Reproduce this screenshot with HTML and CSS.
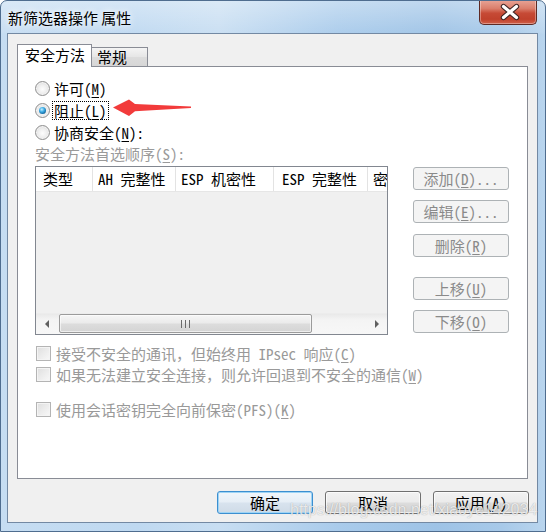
FILE: index.html
```html
<!DOCTYPE html>
<html lang="zh-CN">
<head>
<meta charset="utf-8">
<title>新筛选器操作 属性</title>
<link rel="stylesheet" href="styles.css">
</head>
<body>
<div class="window">
  <div class="titlebar">
    <span class="title">新筛选器操作 属性</span>
    <div class="close">
      <svg width="58" height="25" viewBox="0 0 58 25">
        <path d="M24.5 7.5 L37.5 18.5 M37.5 7.5 L24.5 18.5" stroke="#3b2424" stroke-width="5.4" stroke-linecap="round" fill="none"/>
        <path d="M24.5 7.5 L37.5 18.5 M37.5 7.5 L24.5 18.5" stroke="#ffffff" stroke-width="3.2" stroke-linecap="round" fill="none"/>
      </svg>
    </div>
  </div>
  <div class="client">
    <div class="tabs">
      <div class="tab active">安全方法</div>
      <div class="tab">常规</div>
    </div>
    <div class="panel">
      <svg class="annot-arrow" width="80" height="18" viewBox="0 0 80 18">
        <polygon points="1,8.5 17,0.5 23,5 79,7.6 79,9 23,12.2 17,17" fill="#f23b3b"/>
      </svg>
      <div class="radio-row"><span class="radio"></span><span class="rtext">许可(<u>M</u>)</span></div>
      <div class="radio-row"><span class="radio checked"></span><span class="rtext focus">阻止(<u>L</u>)</span></div>
      <div class="radio-row"><span class="radio"></span><span class="rtext">协商安全(<u>N</u>):</span></div>
      <div class="label-dis">安全方法首选顺序(<u>S</u>):</div>
      <div class="list-row">
        <div class="list">
          <div class="list-head">
            <div class="col c1">类型</div>
            <div class="col c2">AH 完整性</div>
            <div class="col c3">ESP 机密性</div>
            <div class="col c4">ESP 完整性</div>
            <div class="col c5">密</div>
          </div>
          <div class="list-body"></div>
          <div class="hscroll">
            <div class="sbtn"><span class="tri-left"></span></div>
            <div class="track">
              <div class="thumb"><span class="grip"></span><span class="grip"></span><span class="grip"></span></div>
            </div>
            <div class="sbtn"><span class="tri-right"></span></div>
          </div>
        </div>
        <div class="side-btns">
          <div class="btn dis">添加(<u>D</u>)...</div>
          <div class="btn dis b2">编辑(<u>E</u>)...</div>
          <div class="btn dis b3">删除(<u>R</u>)</div>
          <div class="btn dis b4">上移(<u>U</u>)</div>
          <div class="btn dis b5">下移(<u>O</u>)</div>
        </div>
      </div>
      <div class="check-row r1"><span class="cbox"></span><span class="ctext">接受不安全的通讯，但始终用 IPsec 响应(<u>C</u>)</span></div>
      <div class="check-row"><span class="cbox"></span><span class="ctext">如果无法建立安全连接，则允许回退到不安全的通信(<u>W</u>)</span></div>
      <div class="check-row r3"><span class="cbox"></span><span class="ctext">使用会话密钥完全向前保密(PFS)(<u>K</u>)</span></div>
    </div>
    <div class="bottom-btns">
      <div class="btn default">确定</div>
      <div class="btn">取消</div>
      <div class="btn">应用(<u>A</u>)</div>
    </div>
  </div>
  <div class="watermark">https://blog.csdn.net/xiaoye142034</div>
</div>
</body>
</html>
```
FILE: styles.css
```css
* { box-sizing: border-box; }
html, body { margin: 0; padding: 0; }
body {
  width: 546px;
  height: 532px;
  overflow: hidden;
  font-family: "Noto Sans Mono CJK SC", "Noto Sans CJK SC", sans-serif;
  font-size: 15px;
  color: #000;
  background: #fff;
}
u { text-decoration: underline; text-underline-offset: 2px; }

.window {
  position: relative;
  width: 546px;
  height: 532px;
  border: 1px solid #4f6d8f;
  border-radius: 7px 7px 0 0;
  overflow: hidden;
  display: flex;
  flex-direction: column;
  background:
    linear-gradient(to bottom, rgba(255,255,255,0.35) 0, rgba(255,255,255,0.05) 32px, rgba(255,255,255,0) 33px),
    linear-gradient(to right, #c6ddf2 0%, #bfd9f1 25%, #c8def2 40%, #a9cbeb 62%, #9ec3e6 80%, #a7c9e9 92%, #b9d5ee 100%);
}

.titlebar {
  height: 32px;
  flex: none;
  display: flex;
  justify-content: space-between;
  align-items: flex-start;
  padding-left: 7px;
  padding-right: 8px;
}
.title {
  font-family: "Noto Sans CJK SC", sans-serif;
  font-size: 15px;
  line-height: 20px;
  margin-top: 7px;
  color: #000;
  text-shadow: 0 0 6px rgba(255,255,255,0.9), 0 0 10px rgba(255,255,255,0.7);
}
.close {
  width: 58px;
  height: 25px;
  margin-top: -1px;
  border: 1px solid #5e2a24;
  border-top: none;
  border-radius: 0 0 5px 5px;
  background: linear-gradient(to bottom, #e8a597 0%, #db7f6c 35%, #c64a36 55%, #c0412c 80%, #d0604a 100%);
  box-shadow: inset 0 0 0 1px rgba(255,255,255,0.35);
}
.close svg { display: block; margin: -1px 0 0 -1px; }

.client {
  height: 490px;
  margin: 0 7px 0 6px;
  border: 1px solid #7389a3;
  background: #f0f0f0;
  display: flex;
  flex-direction: column;
  padding: 10px 8px 8px 9px;
}

.tabs {
  display: flex;
  align-items: flex-end;
  height: 22px;
  flex: none;
}
.tab {
  height: 19px;
  width: 56px;
  padding-left: 5px;
  line-height: 18px;
  border: 1px solid #898c95;
  border-left: none;
  border-bottom: none;
  background: linear-gradient(to bottom, #f4f4f4, #e6e6e6 50%, #dcdcdc 51%, #d6d6d6);
}
.tab.active {
  position: relative;
  z-index: 1;
  height: 23px;
  width: 75px;
  margin-bottom: -1px;
  padding-left: 7px;
  line-height: 20px;
  border-left: 1px solid #898c95;
  background: #fff;
}

.panel {
  position: relative;
  width: 511px;
  height: 413px;
  flex: none;
  border: 1px solid #898c95;
  background: #fff;
  padding: 10px 0 0 17px;
}
.annot-arrow {
  position: absolute;
  left: 94px;
  top: 32px;
}

.radio-row {
  height: 22px;
  display: flex;
  align-items: center;
}
.radio {
  position: relative;
  width: 15px;
  height: 15px;
  flex: none;
  border-radius: 50%;
  border: 1px solid #8f8f8f;
  background: radial-gradient(circle at 50% 55%, #fdfdfd 0, #eeeeee 45%, #cfcfcf 100%);
  box-shadow: inset 0 0 0 1px #f3f3f3;
}
.radio.checked::after {
  content: "";
  position: absolute;
  left: 3px;
  top: 3px;
  width: 7px;
  height: 7px;
  border-radius: 50%;
  background: radial-gradient(circle at 40% 35%, #c9f0ff 0, #47b3ea 35%, #0f679f 75%, #0c3d64 100%);
}
.rtext { margin-left: 4px; }
.rtext.focus {
  margin-left: 3px;
  padding: 0 1px;
  line-height: 17px;
  outline: 1px dotted #000;
}

.label-dis {
  height: 22px;
  line-height: 22px;
  color: #9a9a9a;
}

.list-row {
  display: flex;
  margin-top: 1px;
}
.list {
  width: 353px;
  height: 169px;
  flex: none;
  border: 1px solid #828790;
  background: #f0f0f0;
  display: flex;
  flex-direction: column;
}
.list-head {
  height: 25px;
  flex: none;
  display: flex;
  background: #fff;
  border-bottom: 1px solid #e6e6e6;
  overflow: hidden;
}
.col {
  flex: none;
  line-height: 24px;
  padding-left: 6px;
  white-space: nowrap;
  overflow: hidden;
  border-right: 1px solid #e3e3e3;
}
.c1 { width: 57px; padding-left: 7px; }
.c2 { width: 83px; padding-left: 5px; }
.c3 { width: 98px; padding-left: 5px; }
.c4 { width: 94px; padding-left: 8px; }
.c5 { flex: 1; min-width: 0; border-right: none; padding-left: 5px; }
.list-body { flex: 1; }
.hscroll {
  height: 21px;
  flex: none;
  display: flex;
  background: linear-gradient(to bottom, #e9e9e9, #f4f4f4 30%, #f7f7f7);
  border-top: 1px solid #ececec;
}
.sbtn {
  width: 21px;
  flex: none;
  display: flex;
  align-items: center;
  justify-content: center;
}
.tri-left {
  width: 0; height: 0;
  border-top: 4px solid transparent;
  border-bottom: 4px solid transparent;
  border-right: 4px solid #606060;
}
.tri-right {
  width: 0; height: 0;
  border-top: 4px solid transparent;
  border-bottom: 4px solid transparent;
  border-left: 4px solid #606060;
}
.track { flex: 1; padding-left: 2px; }
.thumb {
  width: 253px;
  height: 19px;
  border: 1px solid #9b9b9b;
  border-radius: 2px;
  background: linear-gradient(to bottom, #f6f6f6 0%, #ebebeb 45%, #dcdcdc 55%, #d4d4d4 100%);
  box-shadow: inset 0 0 0 1px rgba(255,255,255,0.6);
  display: flex;
  align-items: center;
  justify-content: center;
  gap: 3px;
}
.grip {
  width: 1px;
  height: 8px;
  background: #6a6a6a;
}

.side-btns {
  margin-left: 25px;
  margin-top: 1px;
  display: flex;
  flex-direction: column;
}
.btn {
  width: 96px;
  height: 23px;
  flex: none;
  border: 1px solid #707070;
  border-radius: 3px;
  background: linear-gradient(to bottom, #f2f2f2 0%, #ebebeb 48%, #dddddd 52%, #cfcfcf 100%);
  box-shadow: inset 0 0 0 1px rgba(255,255,255,0.7);
  text-align: center;
  line-height: 21px;
  white-space: nowrap;
}
.btn.dis {
  border-color: #adb2b5;
  background: #f4f4f4;
  box-shadow: none;
  color: #8a8a8a;
}
.b2 { margin-top: 10px; }
.b3 { margin-top: 11px; }
.b4 { margin-top: 20px; }
.b5 { margin-top: 10px; }

.check-row {
  height: 21px;
  display: flex;
  align-items: center;
  padding-left: 1px;
}
.check-row.r1 { margin-top: 8px; }
.check-row.r3 { margin-top: 14px; }
.cbox {
  width: 15px;
  height: 15px;
  flex: none;
  border: 1px solid #b4b4b4;
  background: linear-gradient(135deg, #dedede 0%, #ececec 50%, #f8f8f8 100%);
  box-shadow: inset 0 0 0 1px #f4f4f4;
}
.ctext {
  margin-left: 5px;
  color: #999;
  white-space: nowrap;
}

.bottom-btns {
  display: flex;
  justify-content: flex-end;
  gap: 12px;
  margin-top: 12px;
}
.btn.default {
  border-color: #3c8fd0;
  background: linear-gradient(to bottom, #f1f6fb 0%, #e6eef6 48%, #d8e3ee 52%, #cfdbe7 100%);
  box-shadow: inset 0 0 0 1px #9ed4f5;
}

.watermark {
  position: absolute;
  left: 289px;
  top: 500px;
  font-family: "Liberation Sans", Arial, sans-serif;
  font-size: 16px;
  color: rgba(255,255,255,0.78);
  text-shadow: 0 0 1px rgba(80,80,80,0.5);
  white-space: nowrap;
  pointer-events: none;
}
```
